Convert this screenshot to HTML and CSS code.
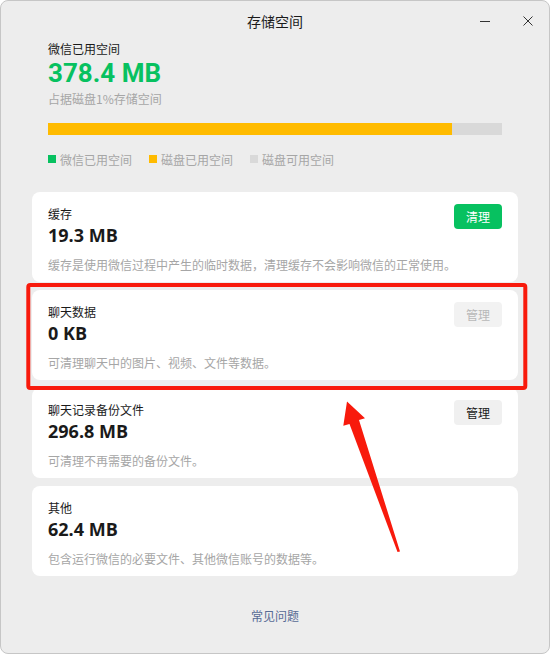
FILE: index.html
```html
<!DOCTYPE html>
<html lang="zh-CN">
<head>
<meta charset="utf-8">
<title>存储空间</title>
<link rel="stylesheet" href="styles.css">
</head>
<body>
<div class="window">
  <header class="titlebar">
    <span></span>
    <span class="title">存储空间</span>
    <div class="controls">
      <svg class="ctl" width="10" height="10" viewBox="0 0 10 10"><line x1="0" y1="5.5" x2="10" y2="5.5" stroke="#333" stroke-width="1"/></svg>
      <svg class="ctl" width="10" height="10" viewBox="0 0 10 10"><path d="M0.5 0.5 L9.5 9.5 M9.5 0.5 L0.5 9.5" stroke="#333" stroke-width="1" fill="none"/></svg>
    </div>
  </header>

  <section class="summary">
    <div class="label">微信已用空间</div>
    <div class="total">378.4 MB</div>
    <div class="sub">占据磁盘1%存储空间</div>
    <div class="bar"><div class="bar-fill" style="width:89%"></div></div>
    <ul class="legend">
      <li><i class="sq green"></i>微信已用空间</li>
      <li><i class="sq yellow"></i>磁盘已用空间</li>
      <li><i class="sq gray"></i>磁盘可用空间</li>
    </ul>
  </section>

  <div class="cards">
    <div class="card">
      <div class="card-title">缓存</div>
      <div class="card-value">19.3 MB</div>
      <button class="btn primary">清理</button>
      <div class="card-desc">缓存是使用微信过程中产生的临时数据，清理缓存不会影响微信的正常使用。</div>
    </div>
    <div class="card">
      <div class="card-title">聊天数据</div>
      <div class="card-value">0 KB</div>
      <button class="btn disabled">管理</button>
      <div class="card-desc">可清理聊天中的图片、视频、文件等数据。</div>
    </div>
    <div class="card">
      <div class="card-title">聊天记录备份文件</div>
      <div class="card-value">296.8 MB</div>
      <button class="btn">管理</button>
      <div class="card-desc">可清理不再需要的备份文件。</div>
    </div>
    <div class="card">
      <div class="card-title">其他</div>
      <div class="card-value">62.4 MB</div>
      <div class="card-desc">包含运行微信的必要文件、其他微信账号的数据等。</div>
    </div>
  </div>

  <div class="faq">常见问题</div>

  <svg class="annotation" width="550" height="654" viewBox="0 0 550 654">
    <rect x="28.3" y="285" width="497" height="103" rx="2" ry="2" fill="none" stroke="#f81a0c" stroke-width="4"/>
    <polygon points="347,401.5 365,418.3 359,420 400,551.5 397.5,552 349.5,424 343.3,425.7" fill="#f81a0c"/>
  </svg>
</div>
</body>
</html>
```

FILE: styles.css
```css
html, body {
  margin: 0;
  padding: 0;
  background: #ffffff;
}

body {
  font-family: "Noto Sans CJK SC", "Noto Sans", sans-serif;
  color: #1a1a1a;
}

.window {
  position: relative;
  width: 550px;
  height: 654px;
  box-sizing: border-box;
  border: 1px solid #c6c6c6;
  border-radius: 8px;
  background: #ededed;
  overflow: hidden;
}

.titlebar {
  height: 39px;
  display: grid;
  grid-template-columns: 1fr auto 1fr;
  align-items: center;
}

.title {
  font-size: 14px;
  line-height: 20px;
  color: #1a1a1a;
}

.controls {
  justify-self: end;
  display: flex;
  align-items: center;
  gap: 33px;
  padding-right: 16px;
}

.ctl {
  display: block;
}

.summary {
  padding: 0 47px;
}

.label {
  margin-top: 1px;
  font-size: 12px;
  line-height: 16px;
}

.total {
  margin-top: 1px;
  font-family: Roboto, "Open Sans", sans-serif;
  font-weight: 700;
  font-size: 26px;
  line-height: 30px;
  color: #07c160;
}

.sub {
  margin-top: 3px;
  font-size: 12px;
  line-height: 16px;
  color: #a6a6a6;
}

.bar {
  margin-top: 16px;
  height: 12px;
  background: #d9d9d9;
  display: flex;
}

.bar-fill {
  height: 100%;
  background: #ffbb00;
}

.legend {
  list-style: none;
  margin: 17px 0 0;
  padding: 0;
  display: flex;
  gap: 17px;
  font-size: 12px;
  line-height: 16px;
  color: #a6a6a6;
}

.legend li {
  display: flex;
  align-items: center;
  gap: 4px;
}

.sq {
  display: block;
  width: 8px;
  height: 8px;
  margin-top: -2px;
}

.sq.green { background: #07c160; }
.sq.yellow { background: #ffbb00; }
.sq.gray { background: #d9d9d9; }

.cards {
  margin: 24px 31px 0;
  display: flex;
  flex-direction: column;
  gap: 8px;
}

.card {
  background: #ffffff;
  border-radius: 8px;
  padding: 14px 16px 9px;
  display: grid;
  grid-template-columns: 1fr auto;
  grid-template-rows: auto auto auto;
  align-items: start;
}

.card-title {
  grid-column: 1;
  grid-row: 1;
  font-size: 12px;
  line-height: 16px;
  color: #1a1a1a;
}

.card-value {
  grid-column: 1;
  grid-row: 2;
  margin-top: 1px;
  font-family: "Open Sans", "Noto Sans CJK SC", sans-serif;
  font-weight: 700;
  font-size: 18px;
  line-height: 24px;
  color: #1a1a1a;
}

.card-desc {
  grid-column: 1 / -1;
  grid-row: 3;
  margin-top: 10px;
  font-size: 12px;
  line-height: 16px;
  color: #a6a6a6;
  white-space: nowrap;
}

.btn {
  grid-column: 2;
  grid-row: 1 / 3;
  margin-top: -2px;
  width: 48px;
  height: 25px;
  border: none;
  border-radius: 4px;
  padding: 0;
  font-family: "Noto Sans CJK SC", sans-serif;
  font-size: 12px;
  line-height: 25px;
  background: #f0f0f0;
  color: #1a1a1a;
}

.btn.primary {
  background: #07c160;
  color: #ffffff;
}

.btn.disabled {
  background: #f2f2f2;
  color: #b8b8b8;
}

.faq {
  margin-top: 32px;
  text-align: center;
  font-size: 12px;
  line-height: 16px;
  color: #576b95;
}

.annotation {
  position: absolute;
  left: -1px;
  top: -1px;
  pointer-events: none;
}
```
